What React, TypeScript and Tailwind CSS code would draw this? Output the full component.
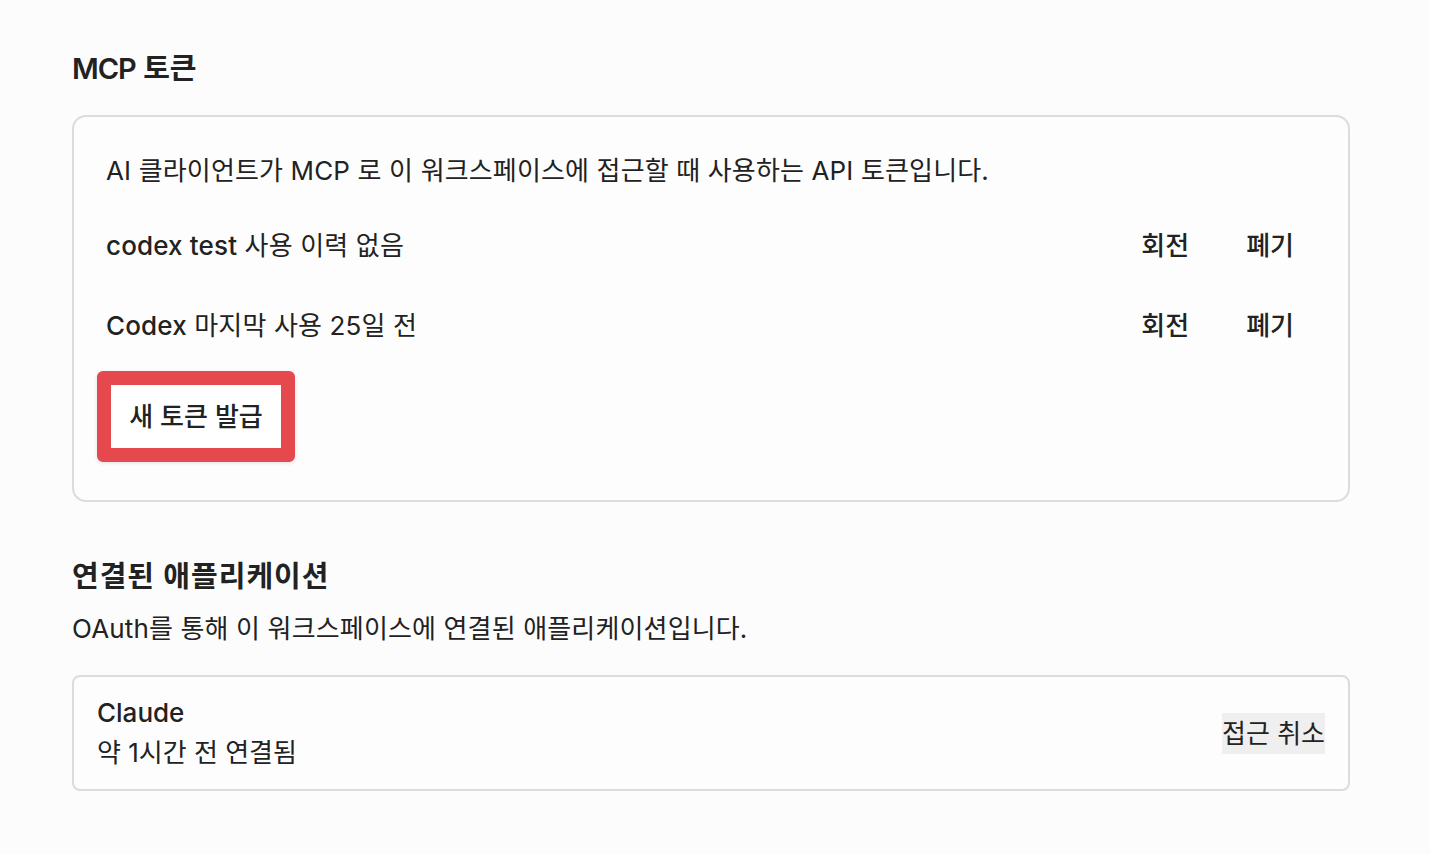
import React from "react";

const font = { fontFamily: 'Inter, "Noto Sans CJK KR", sans-serif' };

function TokenRow({ name, meta }: { name: string; meta: string }) {
  return (
    <div className="flex h-[56px] items-center justify-between">
      <div className="text-[26px] leading-[36px] tracking-[0.15px] text-[#222]">
        <span className="font-medium">{name}</span> <span>{meta}</span>
      </div>
      <div className="mr-[22px] flex items-center gap-[57px]">
        <button className="text-[26px] font-medium leading-[36px] text-[#222]">회전</button>
        <button className="text-[26px] font-medium leading-[36px] text-[#222]">폐기</button>
      </div>
    </div>
  );
}

export default function App() {
  return (
    <div className="min-h-[854px] bg-[#fcfcfc] pt-[51px] text-[#222]" style={font}>
      <div className="ml-[72px] w-[1278px]">
        <h2 className="text-[29px] font-semibold leading-[36px] text-[#222]">
          <span className="tracking-[-1px]">MCP</span> 토큰
        </h2>
        <div className="mt-[28px] rounded-[14px] border-2 border-[#dcdcdc] bg-[#fdfdfd] px-[32px] pb-[38px] pt-[36px]">
          <p className="text-[26px] leading-[36px] tracking-[0.15px] text-[#222]">
            AI 클라이언트가 MCP 로 이 워크스페이스에 접근할 때 사용하는 API 토큰입니다.
          </p>
          <div className="mt-[29px] flex flex-col gap-[24px]">
            <TokenRow name="codex test" meta="사용 이력 없음" />
            <TokenRow name="Codex" meta="마지막 사용 25일 전" />
          </div>
          <div className="mt-[17px] -ml-[9px] flex">
            <button className="flex h-[91px] w-[198px] items-center justify-center rounded-[6px] border-[14px] border-[#e5484d] bg-white text-[26px] font-medium leading-[36px] text-[#222] shadow-[0_1px_4px_rgba(0,0,0,0.12)]">
              새 토큰 발급
            </button>
          </div>
        </div>

        <h2 className="mt-[57px] text-[29px] font-semibold leading-[36px] tracking-[1px] text-[#222]">연결된 애플리케이션</h2>
        <p className="mt-[16px] text-[26px] leading-[36px] tracking-[0.15px] text-[#222]">
          OAuth를 통해 이 워크스페이스에 연결된 애플리케이션입니다.
        </p>
        <div className="mt-[28px] flex items-center justify-between rounded-[8px] border-2 border-[#dcdcdc] bg-[#fdfdfd] py-[16px] pl-[23px] pr-[23px]">
          <div>
            <div className="text-[26px] font-medium leading-[40px] text-[#222]">Claude</div>
            <div className="text-[26px] leading-[40px] text-[#222]">약 1시간 전 연결됨</div>
          </div>
          <button className="h-[41px] bg-[#efefef] text-[26px] leading-[41px] text-[#222]">접근 취소</button>
        </div>
      </div>
    </div>
  );
}
